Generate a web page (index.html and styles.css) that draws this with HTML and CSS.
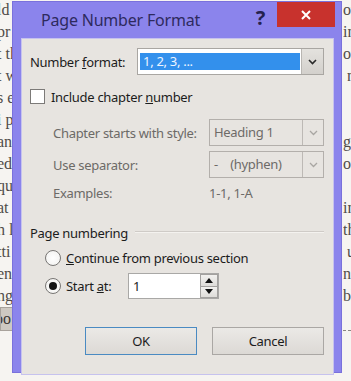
FILE: index.html
```html
<!DOCTYPE html>
<html lang="en">
<head>
    <meta charset="UTF-8">
    <title>Page Number Format</title>
    <link rel="stylesheet" href="styles.css">
</head>
<body>
    <div class="doc">
        <div class="ln"><span class="l">ld t</span><span class="r">ow</span></div>
        <div class="ln"><span class="l">pr</span><span class="r">in</span></div>
        <div class="ln"><span class="l">t th</span><span class="r">or</span></div>
        <div class="ln"><span class="l">t w</span><span class="r ind">m</span></div>
        <div class="ln"><span class="l">s e</span><span class="r"></span></div>
        <div class="ln"><span class="l">i p</span><span class="r"></span></div>
        <div class="ln"><span class="l">an</span><span class="r">gu</span></div>
        <div class="ln"><span class="l">ed</span><span class="r">or</span></div>
        <div class="ln"><span class="l">qu</span><span class="r"></span></div>
        <div class="ln"><span class="l">at</span><span class="r">in</span></div>
        <div class="ln"><span class="l">h l</span><span class="r">th</span></div>
        <div class="ln"><span class="l">tti</span><span class="r ind">u</span></div>
        <div class="ln"><span class="l">en</span><span class="r">n i</span></div>
        <div class="ln"><span class="l">ng</span><span class="r">bl</span></div>
        <div class="toolrow"><span class="toolbtn">oo</span><span class="dash"></span></div>
    </div>

    <div class="dialog">
        <div class="titlebar">
            <span class="title">Page Number Format</span>
            <span class="help">?</span>
            <span class="close">
                <svg width="10" height="10" viewBox="0 0 10 10"><path d="M1 1 L9 9 M9 1 L1 9" stroke="#fff" stroke-width="2"/></svg>
            </span>
        </div>

        <div class="client">
            <div class="row fmt">
                <span class="lbl">Number <u>f</u>ormat:</span>
                <div class="combo active">
                    <span class="val">1, 2, 3, ...</span>
                    <span class="drop">
                        <svg width="9" height="6" viewBox="0 0 9 6"><path d="M1 1 L4.5 4.5 L8 1" fill="none" stroke="#2a2a2a" stroke-width="1.6"/></svg>
                    </span>
                </div>
            </div>

            <div class="row check">
                <span class="box"></span>
                <span>Include chapter <u>n</u>umber</span>
            </div>

            <div class="row sub first">
                <span class="lbl sublbl">Chapter starts with style:</span>
                <div class="combo off">
                    <span class="val">Heading 1</span>
                    <span class="drop">
                        <svg width="9" height="6" viewBox="0 0 9 6"><path d="M1 1 L4.5 4.5 L8 1" fill="none" stroke="#a9a6a2" stroke-width="1.3"/></svg>
                    </span>
                </div>
            </div>
            <div class="row sub">
                <span class="lbl sublbl">Use separator:</span>
                <div class="combo off">
                    <span class="val">-&nbsp;&nbsp;&nbsp;&nbsp;(hyphen)</span>
                    <span class="drop">
                        <svg width="9" height="6" viewBox="0 0 9 6"><path d="M1 1 L4.5 4.5 L8 1" fill="none" stroke="#a9a6a2" stroke-width="1.3"/></svg>
                    </span>
                </div>
            </div>
            <div class="row sub examples">
                <span class="lbl sublbl">Examples:</span>
                <span class="exval">1-1, 1-A</span>
            </div>

            <div class="row group">
                <span>Page numbering</span>
                <span class="rule"></span>
            </div>

            <div class="row radio first-radio">
                <span class="dot"></span>
                <span><u>C</u>ontinue from previous section</span>
            </div>
            <div class="row radio start">
                <span class="dot on"></span>
                <span class="startlbl">Start <u>a</u>t:</span>
                <div class="spin">
                    <span class="num">1</span>
                    <span class="arrows">
                        <span class="arr">
                            <svg width="8" height="5" viewBox="0 0 8 5"><path d="M0 5 L4 0 L8 5 Z" fill="#111"/></svg>
                        </span>
                        <span class="arr">
                            <svg width="8" height="5" viewBox="0 0 8 5"><path d="M0 0 L4 5 L8 0 Z" fill="#111"/></svg>
                        </span>
                    </span>
                </div>
            </div>

            <div class="row buttons">
                <span class="btn default">OK</span>
                <span class="btn">Cancel</span>
            </div>
        </div>
    </div>
</body>
</html>
```

FILE: styles.css
```css
body {
    margin: 0;
    padding: 0;
    width: 351px;
    height: 381px;
    overflow: hidden;
    position: relative;
    background-color: #f6f4f1;
}

/* page behind the dialog */
.doc {
    margin-top: -1px;
    font-family: 'Liberation Serif', 'DejaVu Serif', serif;
    font-size: 16px;
    color: #4f4b48;
}

.ln {
    display: flex;
    justify-content: space-between;
    height: 22px;
    line-height: 22px;
    white-space: nowrap;
}

.l {
    margin-left: -3px;
    width: 20px;
    overflow: hidden;
}

.r {
    width: 8px;
    overflow: hidden;
}

.r.ind {
    padding-left: 4px;
    width: 4px;
}

.toolrow {
    display: flex;
    justify-content: space-between;
    align-items: flex-end;
    height: 24px;
}

.toolbtn {
    width: 26px;
    height: 22px;
    line-height: 22px;
    border: 1px solid #a8a29c;
    background-color: #cdc8c2;
    font-family: 'Liberation Serif', serif;
    font-size: 16px;
    color: #3a3633;
    text-indent: -6px;
    overflow: hidden;
}

.dash {
    width: 8px;
    border-top: 1px dashed #8a8682;
}

/* dialog window */
.dialog {
    position: absolute;
    left: 12px;
    top: 1px;
    width: 328px;
    height: 370px;
    border: 1px solid #7a71dc;
    background-color: #8b84ec;
    font-family: 'Noto Sans', 'Open Sans', sans-serif;
    font-size: 13px;
    letter-spacing: -0.3px;
    color: #1c1c1c;
}

.titlebar {
    display: flex;
    align-items: center;
    height: 36px;
    position: relative;
}

.title {
    margin-left: 28px;
    margin-top: -1px;
    font-size: 16px;
    letter-spacing: -0.2px;
    color: #2e2a5e;
    flex: 1;
}

.help {
    font-size: 20px;
    font-weight: bold;
    color: #25224f;
    margin-top: -6px;
    margin-right: 12px;
}

.close {
    align-self: flex-start;
    margin-top: 0;
    margin-right: 6px;
    width: 58px;
    height: 25px;
    background-color: #c8322d;
    display: flex;
    align-items: center;
    justify-content: center;
}

.client {
    margin: 0 7px 0 8px;
    height: 326px;
    border: 1px solid #c6c2ee;
    background-color: #e7e4e0;
    padding: 9px 9px 0 8px;
}

.row {
    display: flex;
    align-items: center;
}

.fmt {
    height: 27px;
}

.lbl {
    width: 107px;
    flex-shrink: 0;
}

.combo {
    flex: 1;
    height: 25px;
    display: flex;
    border: 1px solid #a9a6a2;
}

.combo.active {
    background-color: #fff;
}

.combo.active .val {
    margin: 4px 1px 4px 2px;
    flex: 1;
    background-color: #3390ec;
    color: #eef4ff;
    line-height: 17px;
    padding-left: 3px;
}

.combo.active .drop {
    width: 21px;
    border-left: 1px solid #b9b6b2;
    background: linear-gradient(#e4e2de, #d3d0cc);
}

.drop {
    display: flex;
    align-items: center;
    justify-content: center;
}

.combo.off {
    border-color: #b3afab;
}

.combo.off .val {
    flex: 1;
    line-height: 25px;
    padding-left: 4px;
    color: #6e6b68;
}

.combo.off .drop {
    width: 20px;
    border-left: 1px solid #bdb9b5;
}

.check {
    margin-top: 14px;
    height: 15px;
}

.box {
    width: 13px;
    height: 13px;
    border: 1px solid #7c7a78;
    background-color: #fff;
    margin-right: 6px;
}

.sub {
    padding-left: 23px;
    color: #6c6a67;
}

.sub.first {
    margin-top: 15px;
    height: 27px;
}

.sub + .sub {
    margin-top: 5px;
    height: 27px;
}

.sublbl {
    width: 156px;
}

.examples {
    height: 20px !important;
}

.group {
    margin-top: 21px;
    height: 18px;
}

.rule {
    flex: 1;
    margin-left: 7px;
    margin-top: -3px;
    border-top: 1px solid #cfcbc7;
    border-bottom: 1px solid #f4f2ef;
}

.radio {
    padding-left: 15px;
}

.first-radio {
    margin-top: 6px;
    height: 20px;
}

.start {
    margin-top: 5px;
    height: 26px;
}

.dot {
    width: 14px;
    height: 14px;
    border: 1px solid #787674;
    border-radius: 50%;
    background: radial-gradient(#ffffff, #f1f0ee);
    margin-right: 5px;
    display: flex;
    align-items: center;
    justify-content: center;
}

.dot.on::after {
    content: "";
    width: 8px;
    height: 8px;
    border-radius: 50%;
    background-color: #141414;
}

.startlbl {
    width: 62px;
}

.spin {
    width: 89px;
    height: 24px;
    border: 1px solid #a9a8a6;
    background-color: #fff;
    display: flex;
}

.num {
    flex: 1;
    line-height: 24px;
    padding-left: 4px;
}

.arrows {
    width: 18px;
    display: flex;
    flex-direction: column;
}

.arr {
    flex: 1;
    border: 1px solid #a3a19f;
    background: linear-gradient(#f2f1ef, #dedcd9);
    display: flex;
    align-items: center;
    justify-content: center;
}

.arr + .arr {
    border-top: none;
}

.buttons {
    margin-top: 28px;
    justify-content: flex-end;
    gap: 15px;
}

.btn {
    width: 110px;
    height: 26px;
    line-height: 26px;
    text-align: center;
    border: 1px solid #aaa7a4;
    background: linear-gradient(#ebe9e6, #dcd9d5);
}

.btn.default {
    border-color: #4a8ac2;
}
```
